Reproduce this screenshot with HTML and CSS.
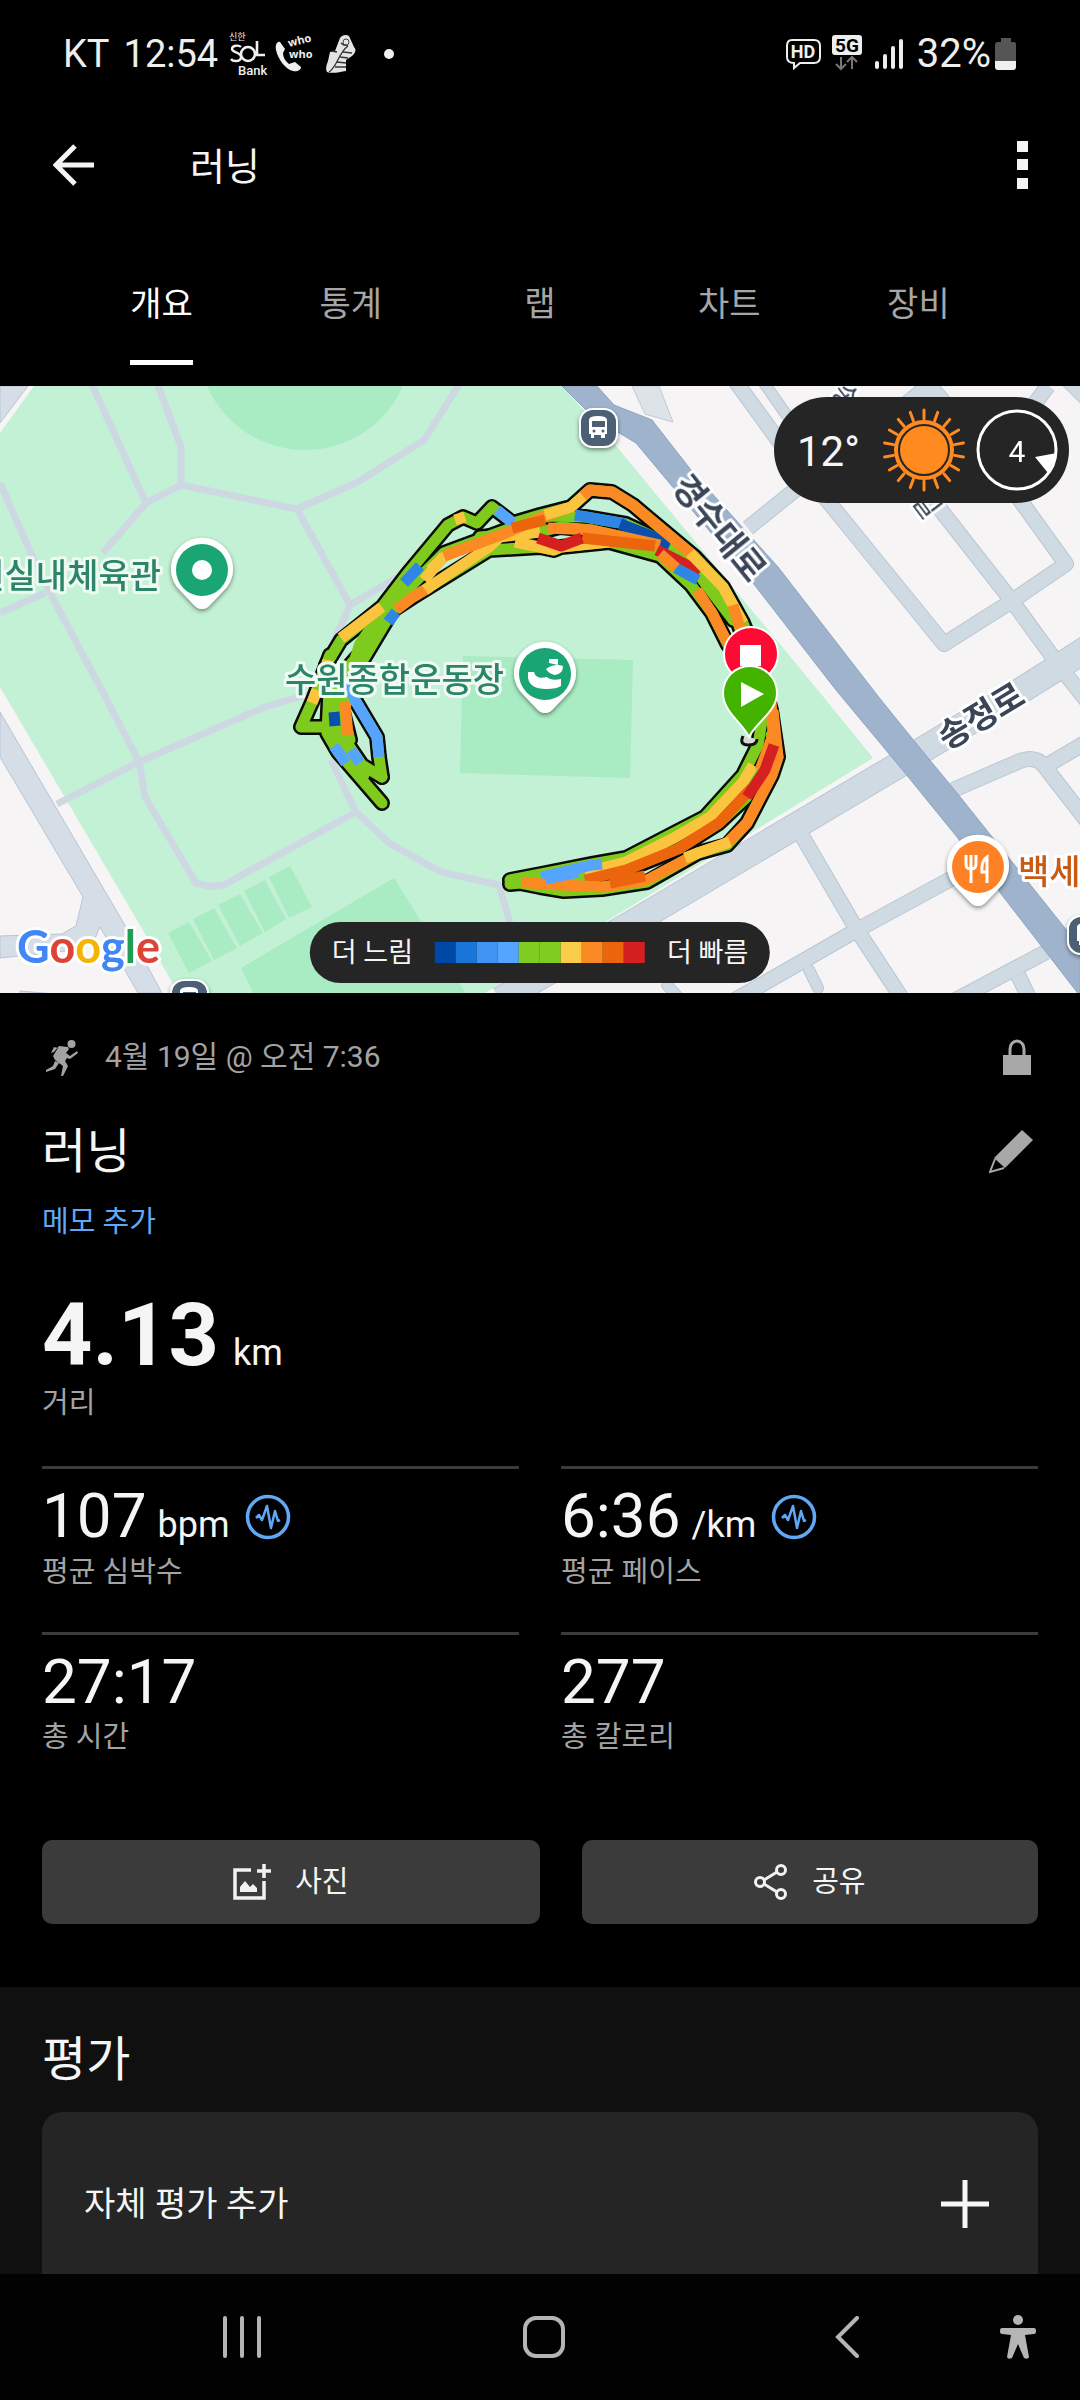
FILE: index.html
```html
<!DOCTYPE html>
<html lang="ko">
<head>
<meta charset="utf-8">
<meta name="viewport" content="width=device-width, initial-scale=1">
<title>러닝</title>
<link rel="stylesheet" href="styles.css">
</head>
<body>
<div class="statusbar">
  <div class="status-group">
    <span class="carrier">KT</span>
    <span class="clock">12:54</span>
    <svg class="notices" width="174" height="48" viewBox="0 0 174 48" role="img" aria-label="알림">
      <g fill="#f0f0f0">
        <text x="1" y="10" class="n-tiny">신한</text>
        <path d="M13 17c-2-2-9-2-9 2s9 3 9 8-8 5-10 2" fill="none" stroke="#f0f0f0" stroke-width="2.4"/>
        <circle cx="20" cy="24" r="7" fill="none" stroke="#f0f0f0" stroke-width="2.6"/>
        <path d="M29 11v14h8" fill="none" stroke="#f0f0f0" stroke-width="2.6"/>
        <text x="10" y="45" class="n-bank">Bank</text>
        <path d="M52 12c-3-1-5 3-4 8 2 9 9 19 17 21 4 1 8-1 8-4l-6-5-6 2c-4-3-6-7-6-11l2-4z"/>
        <text x="61" y="17" class="n-who" transform="rotate(-14 61 17)">who</text>
        <text x="61" y="28" class="n-who">who</text>
        <path d="M112 8c2-3 6-4 9-2l5 11c3 3 1 6-2 9l-6 4v11c-6 1-14 3-19 1-2-4 0-8 1-11l2-9 5-1z" fill="#e4e4e4"/>
        <path d="M101 42c8-5 10-20 19-26M113 13c2 2 4 3 7 2M104 21l5 1M112 27l8 1M109 32l9 1M107 37l11 0M115 22l9 1" fill="none" stroke="#333" stroke-width="1.3"/>
        <circle cx="118" cy="12" r="3" fill="none" stroke="#444"/>
        <circle cx="161" cy="24" r="5"/>
      </g>
    </svg>
  </div>
  <div class="status-group">
    <svg width="120" height="40" viewBox="780 34 120 40" role="img" aria-label="신호">
      <path d="M787 40h22q6 0 6 6v11q0 6-6 6h-14l-6 5v-5q-7 0-7-6V46q0-6 5-6z" fill="none" stroke="#eee" stroke-width="2"/>
      <text x="798" y="58" class="n-hd">HD</text>
      <rect x="827" y="35" width="30" height="20" rx="3" fill="#eee"/>
      <text x="842" y="52" class="n-5g">5G</text>
      <path d="M836 57v11m-5-4l5 5 5-5M847 69V58m-5 4l5-5 5 5" fill="none" stroke="#777" stroke-width="2"/>
      <path d="M872 63v4M880 56v11M888 48v19M896 41v26" stroke="#eee" stroke-width="4" stroke-linecap="round"/>
    </svg>
    <span class="charge">32%</span>
    <svg width="22" height="34" viewBox="0 0 22 34" aria-hidden="true">
      <path d="M6 1h10v4h3q2 0 2 3v16H0V8q0-3 3-3h3z" fill="#555"/>
      <path d="M0 24h21v6q0 3-3 3H3q-3 0-3-3z" fill="#f0f0f0"/>
    </svg>
  </div>
</div>

<header class="appbar">
  <button class="icon-btn" aria-label="뒤로">
    <svg width="42" height="42" viewBox="0 0 42 42"><path d="M41 21H4M22 2L3 21l19 19" fill="none" stroke="#f4f4f4" stroke-width="5"/></svg>
  </button>
  <h1 class="appbar-title">러닝</h1>
  <button class="icon-btn" aria-label="더보기">
    <svg width="11" height="48" viewBox="0 0 11 48"><path d="M0 0h11v11H0zM0 18h11v11H0zM0 37h11v11H0z" fill="#f4f4f4"/></svg>
  </button>
</header>

<nav class="tabs">
  <a class="tab is-active" href="#overview">개요</a>
  <a class="tab" href="#stats">통계</a>
  <a class="tab" href="#laps">랩</a>
  <a class="tab" href="#charts">차트</a>
  <a class="tab" href="#gear">장비</a>
</nav>

<main class="content" id="overview">
<div class="map">
<svg class="map-canvas" viewBox="0 386 1080 607" preserveAspectRatio="xMidYMid slice" role="img" aria-label="러닝 경로 지도">
  <defs>
    <filter id="shade" x="-30%" y="-30%" width="160%" height="160%"><feDropShadow dx="0" dy="2" stdDeviation="2" flood-opacity=".45"/></filter>
    <g id="streets" fill="none" stroke-linejoin="round">
      <g class="w16">
        <path d="M720 360L778 440 840 516 944 644 1012 601 1066 564 1020 500 960 420 929 385 905 405"/>
        <path d="M929 385L900 450 943 513 1012 601 1060 667 1090 705"/>
        <path d="M1000 450L1048 386M1068 380L1090 402"/>
        <path d="M748 528L800 486"/>
        <path d="M802 836L857 930 903 1000"/>
        <path d="M960 874L857 930 735 1000"/>
        <path d="M953 790L1020 761Q1038 754 1048 771L1090 825M1046 766L1090 740"/>
        <path d="M1046 952L950 1003M1018 975L1030 1000"/>
      </g>
      <g class="w10">
        <path d="M809 970L818 988M667 985L690 1010M762 380L790 420M1066 665L1090 640"/>
      </g>
      <g class="w25">
        <path d="M902 763L634 922 500 1000"/>
        <path d="M914 755L1014 695 1060 666 1100 640"/>
      </g>
    </g>
    <g id="run">
      <path d="M382 803L338 752 327 733 329 690 326 665 341 640 382 607 408 573 448 525 463 517 477 523 492 507 513 523 540 515 571 507 590 490 612 492 633 505 695 557 723 587 743 623 756 655 771 710 778 757 772 775 747 823 727 845 698 853 647 882 602 889 564 891 540 887 520 883 510 884"/>
      <path d="M382 777L362 765 345 740 341 700 350 665 372 640 389 610 417 580 444 553 506 530 540 518 550 516 585 517 626 524 654 537 695 560 730 600 744 640"/>
      <path d="M382 777L379 757 377 737 355 700 345 680M330 655L313 700 301 727 324 727"/>
      <path d="M330 690L336 740 364 775M335 680L350 740"/>
      <path d="M360 665L393 610 413 597 489 550 540 547 554 550 561 547 609 542 660 556 691 585 712 613 728 645"/>
      <path d="M480 537L540 532 560 527 592 530 660 545 695 570 733 620"/>
      <path d="M763 715L758 745 743 775 705 817 674 833 626 858 592 864 541 874 510 880"/>
      <path d="M771 735L774 745 747 797 719 823 678 849 626 870 540 882"/>
    </g>
  </defs>
  <rect y="386" width="1080" height="607" fill="#f6f4f4"/>
  <path d="M0 386H28L0 423z" fill="#d5dde6" stroke="#b9c5d4"/>
  <path d="M562 386L617 447 826 700 873 758 607 921 485 993H178L141 927 0 687V433L34 386z" fill="#c3f1d5"/>
  <path d="M632 386l13 28 28 8-14-36z" fill="#dde4e9" stroke="#bfcad4"/>
  <circle cx="305" cy="343" r="107" fill="#a9ebc2"/>
  <path d="M463 656L633 660 630 778 460 773zM241 968L394 878 470 1000H257z" fill="#a9ebc2"/>
  <path d="M168 933L189 922 212 961 189 973zM193 919L214 908 237 948 214 960zM218 905L240 894 263 933 240 946zM244 891L265 880 286 919 265 932zM269 877L290 866 312 907 289 918z" fill="#a9ebc2"/>
  <g class="footpaths">
    <path d="M90 380L146 503M156 380L181 447V485M103 553L146 503 181 485 297 509 358 482 424 440 462 380M297 509L350 605 410 570M350 605L327 657M0 483L34 560 50 593 107 700 139 762 145 797 196 883Q210 888 224 885L356 812 331 760M356 812L389 843 441 872 499 885 512 930M0 613L45 593M57 804L139 762 265 707 310 694"/>
  </g>
  <path d="M0 712L126 927 162 993H138L100 927 95 938 76 950 0 958V936L62 934 76 926 83 897 0 757zM20 991L90 997H20z" fill="#d5dde6" stroke="#b9c5d4"/>
  <use href="#streets" class="street-edge"/>
  <use href="#streets" class="street-fill"/>
  <path d="M562 386H597L614 405 652 420 691 470 778 567 881 700 915 742 957 793 1080 947V996L1039 943 957 837 905 773 836 690 753 583 636 443 593 417z" fill="#9fb3cd" stroke="#8da4c4"/>

  <use href="#run" class="run-edge"/>
  <use href="#run" class="run-gap"/>
  <g class="run-color">
    <path class="c-green c-wide" d="M340 715L348 690 362 645 395 598"/>
    <path class="c-yellow" d="M326 672L328 660M341 638L382 607"/>
    <path class="c-yellow" d="M455 520L465 517M424 580L444 556"/>
    <path class="c-blue" d="M404 583L420 566"/>
    <path class="c-sky" d="M497 510L513 523M346 763L334 746"/>
    <path class="c-orange" d="M345 702L348 735"/>
    <path class="c-navy" d="M334 712L335 726"/>
    <path class="c-sky" d="M360 763L351 750M379 757L377 737 355 700 350 684 358 670"/>
    <path class="c-yellow" d="M317 690L312 703"/>
    <path class="c-blue" d="M388 622L396 612"/>
    <path class="c-orange" d="M396 610L413 597 430 587"/>
    <path class="c-yellow" d="M425 590L489 547 500 537 540 532M430 570L444 557 460 550"/>
    <path class="c-orange" d="M444 556L506 533 540 518 571 507"/>
    <path class="c-yellow" d="M515 542L554 550 561 547 609 542"/>
    <path class="c-blue" d="M575 515L626 524"/>
    <path class="c-navy" d="M620 524L654 537 670 545"/>
    <path class="c-orange" d="M548 528L592 530 660 545"/>
    <path class="c-deep" d="M582 538L655 546M512 528L545 520"/>
    <path class="c-red" d="M538 538L561 546 582 538M657 550L700 572"/>
    <path class="c-blue" d="M676 568L698 580"/>
    <path class="c-orange" d="M660 554L676 568M697 590L712 613 726 640 740 656"/>
    <path class="c-yellow" d="M545 515L571 507 590 490"/>
    <path class="c-orange" d="M583 496L590 490 612 492 633 505 695 557"/>
    <path class="c-yellow" d="M690 553L723 587 743 623"/>
    <path class="c-orange" d="M733 605L745 645"/>
    <path class="c-yellow" d="M753 765L743 782 710 817 674 838 626 862 585 872"/>
    <path class="c-sky" d="M602 864L592 865 541 877"/>
    <path class="c-orange" d="M771 700L773 735 760 770"/>
    <path class="c-deep" d="M752 788L719 823 678 849 626 870 585 880"/>
    <path class="c-orange" d="M773 710L778 757 772 775 747 823 727 843 698 853 647 880 602 887 540 884 522 882"/>
    <path class="c-red" d="M774 745L765 770 747 797"/>
    <path class="c-sky" d="M578 872L545 879"/>
    <path class="c-yellow" d="M730 842L698 853 685 858"/>
    <path class="c-deep" d="M645 876L610 883"/>
  </g>
  <path d="M743 736q-4 9 5 9t9-6" fill="#d8d8d8" stroke="#111" stroke-width="3"/>

  <g filter="url(#shade)">
    <path id="pin" d="M202 609q-5 0-9-5l-16-17a31 31 0 1 1 50 0l-16 17q-4 5-9 5z" fill="#fff"/>
    <use href="#pin" x="343" y="104"/>
    <use href="#pin" x="776" y="297"/>
  </g>
  <circle cx="202" cy="570" r="26" fill="#1aa574"/><circle cx="202" cy="570" r="10" fill="#fff"/>
  <circle cx="545" cy="674" r="26" fill="#1aa574"/>
  <path d="M528 672h6q2 8 13 5 4 4 14 2v7q-4 3-15 3-16 0-18-11zM546 669q8-6 17-3 0 8-8 9-6-1-9-6zM549 659h9v6l-9-2z" fill="#fff"/>
  <circle cx="978" cy="867" r="26" fill="#ff8125"/>
  <path d="M966 855v9q0 5 5 5t5-5v-9M971 855v28M987 883v-26q-6 4-5 15h5" fill="none" stroke="#fff" stroke-width="3"/>
  <g id="bus" filter="url(#shade)">
    <rect x="580" y="409" width="37" height="38" rx="13" fill="#4b6075" stroke="#fff" stroke-width="2"/>
    <path d="M589 434v-14q0-4 9-4t9 4v14h-2v4h-4v-3h-7v3h-3v-4zM592 421v6h13v-6z" fill="#fff" fill-rule="evenodd"/>
    <circle cx="594" cy="431" r="1.5" fill="#4b6075"/><circle cx="603" cy="431" r="1.5" fill="#4b6075"/>
  </g>
  <use href="#bus" x="-409" y="571"/>
  <use href="#bus" x="488" y="507"/>

  <circle cx="751" cy="654" r="27" fill="#ff0a33" stroke="#fff" stroke-width="2"/>
  <rect x="740" y="645" width="21" height="21" fill="#fff"/>
  <path d="M749 737C742 722 723 712 723 693a27 27 0 0 1 54 0c0 19-21 29-28 44z" fill="#43b300" stroke="#fff" stroke-width="2"/>
  <path d="M741 682l23 12-23 13z" fill="#fff"/>

  <text class="poi poi-green" x="161" y="588" text-anchor="end">원실내체육관</text>
  <text class="poi poi-green" x="504" y="692" text-anchor="end">수원종합운동장</text>
  <text class="poi poi-orange" x="1018" y="884">백세</text>
  <text class="road-name" transform="translate(719 528) rotate(51)" y="12" text-anchor="middle">경수대로</text>
  <text class="road-name" transform="translate(981 716) rotate(-31)" y="12" text-anchor="middle">송정로</text>
  <text class="road-name road-small" transform="translate(886 451) rotate(53)" y="10" text-anchor="middle">송정로42번길</text>
  <text class="google" x="17" y="963"><tspan fill="#4285f4">G</tspan><tspan fill="#db4437">o</tspan><tspan fill="#f4b400">o</tspan><tspan fill="#4285f4">g</tspan><tspan fill="#1f9d55">l</tspan><tspan fill="#db4437">e</tspan></text>
</svg>
  <div class="weather">
    <span class="temp">12°</span>
    <svg width="84" height="84" viewBox="-42 -42 84 84" role="img" aria-label="맑음">
      <circle r="24" fill="#ff8a1f"/><circle r="28" fill="none" stroke="#ff8a1f" stroke-width="4"/>
      <g stroke="#ff8a1f" stroke-width="3" stroke-linecap="round">
        <path id="ray" d="M0-31V-40M0 31V40"/>
        <use href="#ray" transform="rotate(20)"/><use href="#ray" transform="rotate(40)"/><use href="#ray" transform="rotate(60)"/><use href="#ray" transform="rotate(80)"/>
        <use href="#ray" transform="rotate(100)"/><use href="#ray" transform="rotate(120)"/><use href="#ray" transform="rotate(140)"/><use href="#ray" transform="rotate(160)"/>
      </g>
    </svg>
    <svg width="84" height="84" viewBox="-42 -42 84 84" role="img" aria-label="풍속 4">
      <circle r="39" fill="none" stroke="#fff" stroke-width="3"/>
      <path d="M18 7L40 3 31 23z" fill="#fff"/>
      <text class="wind" x="0" y="12" text-anchor="middle">4</text>
    </svg>
  </div>
  <div class="legend">
    <span>더 느림</span>
    <span class="scale"><i class="s1"></i><i class="s2"></i><i class="s3"></i><i class="s4"></i><i class="s5"></i><i class="s5"></i><i class="s6"></i><i class="s7"></i><i class="s8"></i><i class="s9"></i></span>
    <span>더 빠름</span>
  </div>
</div>

<section class="details">
  <div class="meta">
    <svg width="42" height="42" viewBox="4 5 42 42" aria-hidden="true"><g fill="#a3a3a3"><circle cx="33.500" cy="13" r="4"/><path d="M16 21l5-6 9 1 1 2-3 4 4 3 7-5 1 2-8 6-3-1-2 3 3 5-5 10h-2l2-10-8-6-2-4 5-8-4-1-3 6zM17 30l4 2-4 6-9 3v-2l7-4z"/></g></svg>
    <p class="date">4월 19일 @ 오전 7:36</p>
    <svg class="lock" width="28" height="36" viewBox="0 0 28 36" role="img" aria-label="비공개"><path d="M0 16h28v20H0z" fill="#a8a8a8"/><path d="M7 17V10a7 8 0 0 1 14 0v7" fill="none" stroke="#a8a8a8" stroke-width="3"/></svg>
  </div>
  <div class="title-row">
    <h2 class="title">러닝</h2>
    <button class="icon-btn edit" aria-label="이름 편집">
      <svg width="44" height="44" viewBox="0 0 44 44"><path d="M33 0l11 10-28 28L5 28z" fill="#a8a8a8"/><path d="M6 29L1 42l14-4" fill="none" stroke="#a8a8a8" stroke-width="2"/></svg>
    </button>
  </div>
  <a class="memo" href="#memo">메모 추가</a>
  <p class="distance"><span>4.13</span><span class="unit">km</span></p>
  <p class="label">거리</p>
  <div class="stats">
    <div class="stat"><p class="value"><span>107</span><span class="unit">bpm</span><svg class="pulse" width="46" height="46" viewBox="0 0 46 46" aria-hidden="true"><g fill="none" stroke="#60a8f6"><circle cx="23" cy="23" r="20.500" stroke-width="3.500"/><path d="M11 24l3-3 3 5 5-14 4 22 4-17 3 10 2-1" stroke-width="2.500" stroke-linejoin="round"/></g></svg></p><p class="label">평균 심박수</p></div>
    <div class="stat"><p class="value"><span>6:36</span><span class="unit">/km</span><svg class="pulse" width="46" height="46" viewBox="0 0 46 46" aria-hidden="true"><g fill="none" stroke="#60a8f6"><circle cx="23" cy="23" r="20.500" stroke-width="3.500"/><path d="M11 24l3-3 3 5 5-14 4 22 4-17 3 10 2-1" stroke-width="2.500" stroke-linejoin="round"/></g></svg></p><p class="label">평균 페이스</p></div>
    <div class="stat"><p class="value">27:17</p><p class="label">총 시간</p></div>
    <div class="stat"><p class="value">277</p><p class="label">총 칼로리</p></div>
  </div>
  <div class="actions">
    <button class="action">
      <svg width="38" height="36" viewBox="0 0 38 36" aria-hidden="true"><path d="M18 6H2v28h29V17M31 0v14M24 7h14" fill="none" stroke="#f2f2f2" stroke-width="3.500"/><path d="M7 28V23l5-6 5 6 3-3 4 4v4z" fill="#f2f2f2"/></svg>사진
    </button>
    <button class="action">
      <svg width="34" height="36" viewBox="0 0 34 36" aria-hidden="true"><g fill="none" stroke="#f2f2f2" stroke-width="3"><circle cx="6" cy="18" r="4.500"/><circle cx="27" cy="6" r="4.500"/><circle cx="27" cy="30" r="4.500"/><path d="M10 16L23 8M10 20l13 8"/></g></svg>공유
    </button>
  </div>
</section>

<section class="rating">
  <h2 class="title">평가</h2>
  <button class="rate-card">
    <span>자체 평가 추가</span>
    <svg width="48" height="48" viewBox="0 0 48 48" aria-hidden="true"><path d="M24 0v48M0 24h48" stroke="#f6f6f6" stroke-width="5"/></svg>
  </button>
</section>
</main>

<nav class="sysnav" aria-label="시스템">
  <button class="icon-btn" aria-label="최근 앱"><svg width="38" height="42" viewBox="0 0 38 42"><path d="M2 2v38M19 2v38M36 2v38" stroke="#b5b5b5" stroke-width="4" stroke-linecap="round"/></svg></button>
  <button class="icon-btn" aria-label="홈"><svg width="42" height="42" viewBox="0 0 42 42"><rect x="2" y="2" width="38" height="38" rx="11" fill="none" stroke="#b5b5b5" stroke-width="4"/></svg></button>
  <button class="icon-btn" aria-label="뒤로 가기"><svg width="24" height="42" viewBox="0 0 24 42"><path d="M22 2L3 21l19 19" fill="none" stroke="#b5b5b5" stroke-width="4" stroke-linecap="round"/></svg></button>
  <button class="icon-btn a11y" aria-label="접근성"><svg width="36" height="44" viewBox="0 0 36 44"><g fill="#b5b5b5"><circle cx="18" cy="5" r="5"/><path d="M2 13h32q2 0 2 3t-2 3l-9 1 4 22q-1 3-5 1L18 29l-6 14q-4 2-5-1l4-22-9-1q-2 0-2-3t2-3z"/></g></svg></button>
</nav>
</body>
</html>
```
FILE: styles.css
```css
* { box-sizing: border-box; }

body {
  margin: 0;
  min-height: 100vh;
  display: flex;
  flex-direction: column;
  background: #000;
  color: #f5f5f5;
  font-family: Roboto, "Noto Sans CJK KR", sans-serif;
}

h1, h2, p { margin: 0; font-weight: 400; }
svg { display: block; flex: none; }
button { font: inherit; color: inherit; border: 0; cursor: pointer; }
a { text-decoration: none; }

.icon-btn {
  display: flex;
  align-items: center;
  justify-content: center;
  padding: 0;
  background: none;
}

/* status bar */
.statusbar {
  height: 106px;
  padding: 2px 63px 0;
  display: flex;
  align-items: center;
  justify-content: space-between;
  font-size: 38px;
  line-height: 48px;
  color: #eee;
}
.status-group { display: flex; align-items: center; }
.carrier { margin-right: 14px; }
.notices { margin-left: 10px; }
.charge { margin: 0 4px 0 12px; font-size: 40px; }
.n-tiny { font-size: 9px; }
.n-bank { font-size: 13px; font-weight: 500; }
.n-who { font: 700 11px "Open Sans", sans-serif; }
.n-hd { font-size: 18px; font-weight: 700; fill: #eee; text-anchor: middle; }
.n-5g { font-size: 19px; font-weight: 700; fill: #000; text-anchor: middle; }

/* app bar */
.appbar {
  height: 118px;
  padding: 0 52px 0 53px;
  display: flex;
  align-items: center;
}
.appbar-title {
  flex: 1;
  margin-left: 95px;
  padding-top: 4px;
  font-size: 38px;
  line-height: 48px;
}

/* tabs */
.tabs {
  height: 162px;
  padding: 0 67px;
  display: grid;
  grid-template-columns: repeat(5, 1fr);
  justify-items: center;
}
.tab {
  position: relative;
  font-size: 34px;
  line-height: 160px;
  color: #a6a6a6;
}
.tab.is-active { color: #fff; }
.tab.is-active::after {
  content: "";
  position: absolute;
  left: 0;
  right: 0;
  bottom: 21px;
  height: 5px;
  background: #fff;
}

.content { flex: 1; display: flex; flex-direction: column; }

/* map */
.map { position: relative; overflow: hidden; }
.map-canvas { width: 100%; height: auto; }
.footpaths { fill: none; stroke: #cdd8e2; stroke-width: 7px; stroke-linejoin: round; }
.street-edge { stroke: #b9c7d4; --edge: 2px; }
.street-fill { stroke: #d0dae2; --edge: 0px; }
.w10 { stroke-width: calc(10px + var(--edge)); stroke-linecap: round; }
.w16 { stroke-width: calc(14px + var(--edge)); }
.w25 { stroke-width: calc(25px + var(--edge)); }
.run-edge, .run-gap { fill: none; stroke-linejoin: round; stroke-linecap: round; }
.run-edge { stroke: #0b0b0b; stroke-width: 16px; }
.run-gap { stroke: #7fcb1d; stroke-width: 11px; }
.run-color { fill: none; stroke-width: 11px; stroke-linejoin: round; }
.c-wide { stroke-width: 16px; }
.c-green { stroke: #7fcb1d; }
.c-yellow { stroke: #fbc43f; }
.c-orange { stroke: #fb8924; }
.c-deep { stroke: #ec640c; }
.c-red { stroke: #d42020; }
.c-sky { stroke: #55a5ff; }
.c-blue { stroke: #2f86e4; }
.c-navy { stroke: #0a4fae; }
.poi { font-size: 34px; font-weight: 500; paint-order: stroke; stroke: #effaf3; stroke-width: 6px; stroke-linejoin: round; }
.poi-green { fill: #2c8568; }
.poi-orange { fill: #c95a14; stroke: #fff; }
.road-name { font-size: 34px; font-weight: 700; fill: #3a4657; paint-order: stroke; stroke: #fff; stroke-width: 6px; stroke-linejoin: round; }
.road-small { font-size: 28px; font-weight: 400; }
.google { font: 700 45px Lato, sans-serif; paint-order: stroke; stroke: #fff; stroke-width: 6px; stroke-linejoin: round; }

.weather {
  position: absolute;
  top: 11px;
  right: 11px;
  height: 106px;
  padding: 0 10px 0 23px;
  border-radius: 53px;
  background: #252525;
  display: flex;
  align-items: center;
  gap: 9px;
}
.temp { width: 76px; padding-top: 4px; font-size: 42px; line-height: 48px; }
.wind { font-size: 30px; fill: #fff; }

.legend {
  position: absolute;
  left: 50%;
  bottom: 10px;
  transform: translateX(-50%);
  height: 61px;
  padding: 0 22px;
  border-radius: 31px;
  background: #252525;
  display: flex;
  align-items: center;
  gap: 22px;
  font-size: 27px;
  line-height: 48px;
  white-space: nowrap;
}
.scale { display: flex; }
.scale i { width: 21px; height: 21px; }
.s1 { background: #0048a6; }
.s2 { background: #1a75d8; }
.s3 { background: #3f94f2; }
.s4 { background: #55a5ff; }
.s5 { background: #81cc20; }
.s6 { background: #f9cd48; }
.s7 { background: #fb8924; }
.s8 { background: #ec640c; }
.s9 { background: #d42020; }

/* activity details */
.details { padding: 0 42px 63px; }
.meta {
  height: 128px;
  display: flex;
  align-items: center;
  color: #a3a3a3;
}
.date { flex: 1; margin-left: 21px; font-size: 30px; line-height: 48px; }
.lock { margin-right: 7px; }
.title-row { display: flex; align-items: center; justify-content: space-between; }
.title { font-size: 48px; line-height: 62px; }
.edit { margin-right: 5px; }
.memo {
  display: block;
  margin-top: 15px;
  font-size: 29px;
  line-height: 48px;
  color: #60a8f6;
}
.distance {
  margin-top: 44px;
  display: flex;
  align-items: baseline;
  gap: 14px;
  font-size: 88px;
  line-height: 90px;
  font-weight: 700;
}
.unit { font-size: 36px; line-height: 48px; font-weight: 400; }
.label { font-size: 29px; line-height: 46px; color: #a3a3a3; }
.stats {
  margin-top: 40px;
  display: grid;
  grid-template-columns: 1fr 1fr;
  grid-auto-rows: 166px;
  column-gap: 42px;
}
.stat { border-top: 3px solid #3b3b3b; padding-top: 15px; }
.value {
  display: flex;
  align-items: baseline;
  gap: 11px;
  font-size: 62px;
  line-height: 64px;
}
.pulse { align-self: center; margin-left: 4px; }
.actions {
  margin-top: 42px;
  display: grid;
  grid-template-columns: 12fr 11fr;
  column-gap: 42px;
}
.action {
  height: 84px;
  border-radius: 10px;
  background: #3b3b3b;
  display: flex;
  align-items: center;
  justify-content: center;
  gap: 24px;
  font-size: 29px;
  line-height: 48px;
}

/* self evaluation */
.rating {
  flex: 1;
  display: flex;
  flex-direction: column;
  gap: 21px;
  padding: 42px 42px 0;
  background: #101010;
}
.rate-card {
  flex: 1;
  display: flex;
  align-items: flex-start;
  justify-content: space-between;
  padding: 68px 49px 46px 42px;
  border-radius: 20px 20px 0 0;
  background: #252525;
  font-size: 34px;
  line-height: 48px;
}

/* system navigation */
.sysnav {
  height: 126px;
  padding: 0 44px 0 82px;
  display: grid;
  grid-template-columns: 320fr 284fr 322fr 28px;
  align-items: center;
  background: #020202;
}
.a11y { justify-content: flex-end; }
```
